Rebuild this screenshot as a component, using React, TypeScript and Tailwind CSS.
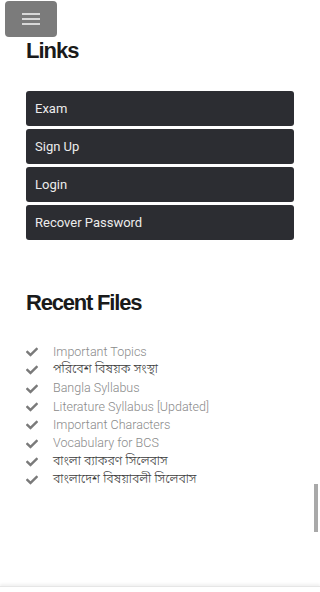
import React from "react";
import { FaCheck } from "react-icons/fa";

const links = ["Exam", "Sign Up", "Login", "Recover Password"];
const files: { t: string; bn?: boolean }[] = [
  { t: "Important Topics" },
  { t: "পরিবেশ বিষয়ক সংস্থা", bn: true },
  { t: "Bangla Syllabus" },
  { t: "Literature Syllabus [Updated]" },
  { t: "Important Characters" },
  { t: "Vocabulary for BCS" },
  { t: "বাংলা ব্যাকরণ সিলেবাস", bn: true },
  { t: "বাংলাদেশ বিষয়াবলী সিলেবাস", bn: true },
];

export default function App() {
  return (
    <div className="relative flex h-[592px] w-[320px] flex-col overflow-hidden bg-white">
      <div className="flex-1">
        <div className="ml-[5px] mt-[1px] flex h-[36px] w-[52px] flex-col items-center justify-center gap-[3px] rounded-[4px] bg-[#7b7b7b]">
          <span className="block h-[2px] w-[18px] bg-[#d8d8d8]" />
          <span className="block h-[2px] w-[18px] bg-[#d8d8d8]" />
          <span className="block h-[2px] w-[18px] bg-[#d8d8d8]" />
        </div>
        <div className="px-[26px]">
          <h2 className="mt-[1px] text-[22px] font-bold leading-[26px] tracking-[-1px] text-[#1a1a1a] [font-family:'Liberation_Sans',Arial,sans-serif]">
            Links
          </h2>
          <div className="mt-[27px] flex flex-col gap-[3px]">
            {links.map((l) => (
              <div
                key={l}
                className="flex h-[35px] items-center rounded-[3px] bg-[#2c2d32] px-[9px] text-[13px] text-[#ececec] [font-family:Roboto,sans-serif]"
              >
                {l}
              </div>
            ))}
          </div>
          <h2 className="mt-[50px] text-[22px] font-bold leading-[26px] tracking-[-1.2px] text-[#1a1a1a] [font-family:'Liberation_Sans',Arial,sans-serif]">
            Recent Files
          </h2>
          <ul className="mt-[27px] flex flex-col">
            {files.map((f) => (
              <li key={f.t} className="flex h-[18.3px] items-center">
                <FaCheck className="h-[12px] w-[12px] text-[#7a7a7a]" />
                <span
                  className={
                    f.bn
                      ? "ml-[15px] text-[12.5px] font-light text-[#3a3a3a] [font-family:'Noto_Sans_Bengali','Noto_Sans',sans-serif]"
                      : "ml-[15px] text-[12.5px] font-light text-[#8a8a8a] [font-family:Roboto,sans-serif]"
                  }
                >
                  {f.t}
                </span>
              </li>
            ))}
          </ul>
        </div>
      </div>
      <div className="h-[6px] border-t border-[#e6e6e6] shadow-[0_-2px_3px_rgba(0,0,0,0.06)]" />
      <div className="absolute right-[2px] top-[484px] h-[48px] w-[4px] bg-[#a9a9a9]" />
    </div>
  );
}
